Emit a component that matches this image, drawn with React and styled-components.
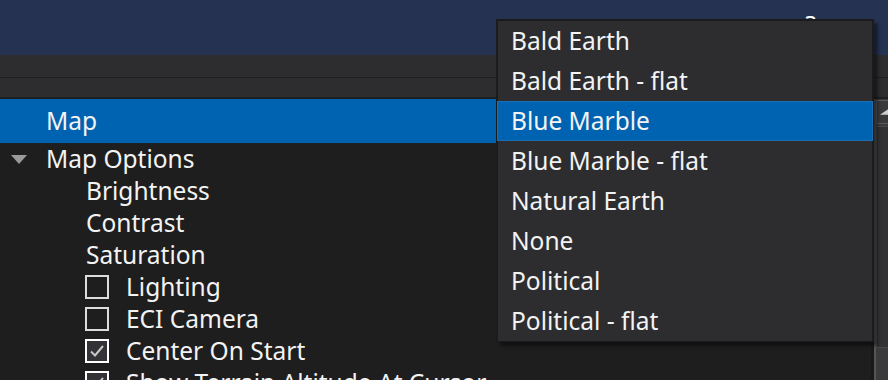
import React from 'react';
import styled, { createGlobalStyle } from 'styled-components';

const GlobalStyle = createGlobalStyle`
  html, body {
    margin: 0;
    padding: 0;
    background: #1e1e1f;
  }
  body {
    font-family: 'Noto Sans', 'Open Sans', sans-serif;
  }
`;

const Page = styled.div`
  position: relative;
  width: 888px;
  height: 380px;
  overflow: hidden;
  background: #1e1e1f;
  display: flex;
  flex-direction: column;
`;

const TitleBar = styled.div`
  height: 55px;
  flex: none;
  background: #253252;
  display: flex;
  justify-content: flex-end;
  align-items: flex-start;
  padding-right: 72px;
`;

const HelpGlyph = styled.span`
  color: #ffffff;
  font-size: 24px;
  line-height: 1;
  margin-top: 12px;
`;

const HeaderBand = styled.div`
  height: ${p => p.h}px;
  flex: none;
  background: #2d2d30;
  border-bottom: ${p => p.line}px solid #1f1f21;
`;

const Body = styled.div`
  flex: 1;
  display: flex;
  min-height: 0;
`;

const Tree = styled.div`
  flex: 1;
  display: flex;
  flex-direction: column;
  border-right: 3px solid #19191a;
`;

const Row = styled.div`
  height: ${p => (p.tall ? 44 : 32)}px;
  flex: none;
  display: flex;
  align-items: center;
  padding-left: ${p => p.indent}px;
  background: ${p => (p.selected ? '#0063b1' : 'transparent')};
  color: #f3f3f3;
  font-size: 24.5px;
  white-space: nowrap;
`;

const Label = styled.span`
  line-height: 1;
`;

const Expander = styled.svg`
  width: 16px;
  height: 9px;
  margin-right: 19px;
  margin-top: 1px;
`;

const Box = styled.span`
  box-sizing: border-box;
  width: 24px;
  height: 24px;
  margin-right: 17px;
  border: 2px solid ${p => (p.checked ? '#ffffff' : '#dcdcdc')};
  background: ${p => (p.checked ? '#333337' : 'transparent')};
  display: flex;
  align-items: center;
  justify-content: center;
`;

const ScrollBar = styled.div`
  width: 12px;
  flex: none;
  display: flex;
  flex-direction: column;
  background: #3b3b3e;
  border-left: 2px solid #555558;
`;

const ScrollButton = styled.div`
  height: 22px;
  margin-top: 1px;
  background: #3a3a3d;
  border: 1px solid #5a5a5d;
  border-right: none;
  display: flex;
  align-items: center;
  padding-left: 3px;
`;

const ScrollThumb = styled.div`
  height: 220px;
  margin-top: 2px;
  background: #323235;
  border: 1px solid #48484b;
  border-right: none;
`;

const Dropdown = styled.ul`
  position: absolute;
  left: 496px;
  top: 19px;
  width: 378px;
  box-sizing: border-box;
  margin: 0;
  padding: 0;
  list-style: none;
  background: #2d2d30;
  border: 2px solid #1b1b1c;
  border-bottom-width: 1px;
  box-shadow: 4px 4px 3px rgba(0, 0, 0, 0.45);
`;

const Option = styled.li`
  box-sizing: border-box;
  height: 40px;
  display: flex;
  align-items: center;
  margin: 0 -1px;
  padding-left: 13px;
  color: #f3f3f3;
  font-size: 24.5px;
  background: ${p => (p.active ? '#0063b1' : 'transparent')};
  border: 1px solid ${p => (p.active ? '#1a6fb5' : 'transparent')};
`;

const options = [
  'Bald Earth',
  'Bald Earth - flat',
  'Blue Marble',
  'Blue Marble - flat',
  'Natural Earth',
  'None',
  'Political',
  'Political - flat',
];

const Check = ({ checked }) => (
  <Box checked={checked}>
    {checked && (
      <svg width="16" height="14" viewBox="0 0 16 14">
        <path d="M2 7.5 L6 11.5 L14 2" fill="none" stroke="#c8c8c8" strokeWidth="2" />
      </svg>
    )}
  </Box>
);

const items = [
  { label: 'Brightness' },
  { label: 'Contrast' },
  { label: 'Saturation' },
  { label: 'Lighting', box: true },
  { label: 'ECI Camera', box: true },
  { label: 'Center On Start', box: true, checked: true },
  { label: 'Show Terrain Altitude At Cursor', box: true, checked: true },
];

const App = () => (
  <Page>
    <GlobalStyle />
    <TitleBar>
      <HelpGlyph>?</HelpGlyph>
    </TitleBar>
    <HeaderBand h={22} line={1} />
    <HeaderBand h={19} line={2} />
    <Body>
      <Tree>
        <Row tall selected indent={46}>
          <Label>Map</Label>
        </Row>
        <Row indent={11}>
          <Expander viewBox="0 0 16 9">
            <path d="M0 0 H16 L8 9 Z" fill="#9a9a9a" />
          </Expander>
          <Label>Map Options</Label>
        </Row>
        {items.map(item => (
          <Row key={item.label} indent={item.box ? 85 : 86}>
            {item.box && <Check checked={item.checked} />}
            <Label>{item.label}</Label>
          </Row>
        ))}
      </Tree>
      <ScrollBar>
        <ScrollButton>
          <svg width="9" height="6" viewBox="0 0 9 6">
            <path d="M0 6 L9 0 V6 Z" fill="#cfcfcf" />
          </svg>
        </ScrollButton>
        <ScrollThumb />
      </ScrollBar>
    </Body>
    <Dropdown>
      {options.map(o => (
        <Option key={o} active={o === 'Blue Marble'}>
          <Label>{o}</Label>
        </Option>
      ))}
    </Dropdown>
  </Page>
);

export default App;
